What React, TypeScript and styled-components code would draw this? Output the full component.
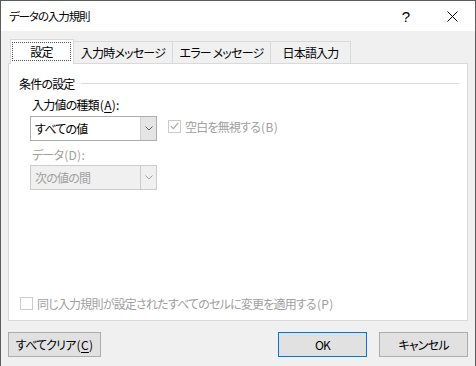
import React from "react";
import styled, { createGlobalStyle } from "styled-components";

const GlobalStyle = createGlobalStyle`
  html, body {
    margin: 0;
    padding: 0;
    background: #ffffff;
  }
  * {
    box-sizing: border-box;
  }
`;

const Window = styled.div`
  width: 476px;
  height: 366px;
  display: flex;
  flex-direction: column;
  border: 1px solid #5c5c5c;
  border-bottom: none;
  font-family: "Noto Sans CJK JP", "Noto Sans", sans-serif;
  font-size: 12px;
  letter-spacing: -0.8px;
  font-feature-settings: "palt";
  color: #000;
  overflow: hidden;
`;

const TitleBar = styled.div`
  height: 30px;
  flex: none;
  display: flex;
  align-items: center;
  background: #ffffff;
  padding-left: 8px;
`;

const Title = styled.div`
  flex: 1;
  font-size: 11.5px;
  letter-spacing: -1.1px;
`;

const TitleButton = styled.div`
  width: 46px;
  height: 30px;
  display: flex;
  align-items: center;
  justify-content: center;
  font-family: "Liberation Sans", sans-serif;
  font-size: 15px;
  letter-spacing: 0;
`;

const Body = styled.div`
  flex: 1;
  display: flex;
  flex-direction: column;
  background: #f0f0f0;
  padding: 8px 7px 0 7px;
`;

const TabRow = styled.div`
  display: flex;
  align-items: flex-end;
  height: 24px;
  padding-left: 2px;
`;

const Tab = styled.div<{ $w: number; $active?: boolean }>`
  width: ${(p) => p.$w}px;
  height: ${(p) => (p.$active ? 25 : 22)}px;
  margin-bottom: ${(p) => (p.$active ? -1 : 0)}px;
  margin-left: -1px;
  position: relative;
  z-index: ${(p) => (p.$active ? 2 : 1)};
  display: flex;
  align-items: stretch;
  justify-content: center;
  background: ${(p) => (p.$active ? "#ffffff" : "#f0f0f0")};
  border: 1px solid #d9d9d9;
  border-bottom: none;
  &:first-child {
    margin-left: 0;
  }
`;

const TabLabel = styled.div<{ $focus?: boolean }>`
  flex: 1;
  display: flex;
  align-items: center;
  justify-content: center;
  padding-bottom: 1px;
  margin: ${(p) => (p.$focus ? "2px 2px 3px 1px" : "0")};
  border: ${(p) => (p.$focus ? "1px dotted #555" : "none")};
`;

const Panel = styled.div`
  height: 258px;
  flex: none;
  display: flex;
  flex-direction: column;
  background: #ffffff;
  border: 1px solid #d9d9d9;
`;

const GroupHeader = styled.div`
  display: flex;
  align-items: center;
  height: 16px;
  margin: 11px 8px 0 10px;
`;

const GroupLine = styled.div`
  flex: 1;
  height: 1px;
  background: #dcdcdc;
  margin-left: 6px;
`;

const FieldLabel = styled.div<{ $disabled?: boolean; $top: number }>`
  height: 16px;
  line-height: 16px;
  margin: ${(p) => p.$top}px 0 0 23px;
  color: ${(p) => (p.$disabled ? "#a0a0a0" : "#000")};
`;

// latin part of a label, e.g. "(A):", keeps normal spacing
const Latin = styled.span`
  letter-spacing: 0.3px;
  margin-left: 1px;
`;

const Key = styled.span`
  text-decoration: underline;
  text-underline-offset: 2px;
`;

const SelectRow = styled.div<{ $top: number }>`
  display: flex;
  align-items: flex-start;
  margin: ${(p) => p.$top}px 0 0 21px;
`;

const Select = styled.div<{ $disabled?: boolean }>`
  width: 127px;
  height: 25px;
  display: flex;
  border: 1px solid ${(p) => (p.$disabled ? "#cccccc" : "#adadad")};
  background: ${(p) => (p.$disabled ? "#f0f0f0" : "#ffffff")};
  color: ${(p) => (p.$disabled ? "#a0a0a0" : "#000")};
`;

const SelectValue = styled.div`
  flex: 1;
  display: flex;
  align-items: center;
  padding-left: 4px;
  padding-bottom: 1px;
`;

const SelectArrow = styled.div<{ $disabled?: boolean }>`
  width: 16px;
  display: flex;
  align-items: center;
  justify-content: center;
  background: ${(p) => (p.$disabled ? "#f0f0f0" : "#e5e5e5")};
  border-left: 1px solid ${(p) => (p.$disabled ? "#cccccc" : "#d0d0d0")};
`;

const CheckRow = styled.div<{ $left: number; $top: number; $bottom?: number }>`
  display: flex;
  align-items: center;
  height: 16px;
  margin: ${(p) => p.$top}px 0 ${(p) => p.$bottom ?? 0}px ${(p) => p.$left}px;
  color: #a0a0a0;
`;

const CheckBox = styled.div`
  width: 13px;
  height: 13px;
  flex: none;
  display: flex;
  align-items: center;
  justify-content: center;
  border: 1px solid #cccccc;
  background: #ffffff;
  margin-right: 4px;
`;

const Spacer = styled.div`
  flex: 1;
`;

const ButtonRow = styled.div`
  display: flex;
  align-items: center;
  margin-top: 11px;
`;

const Button = styled.div<{ $w: number; $default?: boolean; $gap?: number }>`
  width: ${(p) => p.$w}px;
  height: 25px;
  margin-left: ${(p) => p.$gap ?? 0}px;
  display: flex;
  align-items: center;
  justify-content: center;
  padding-bottom: 1px;
  background: #e1e1e1;
  border: 1px solid ${(p) => (p.$default ? "#0078d7" : "#adadad")};
`;

const Chevron = ({ color }: { color: string }) => (
  <svg width="8" height="5" viewBox="0 0 8 5">
    <path d="M0.5 0.5 L4 4 L7.5 0.5" fill="none" stroke={color} strokeWidth="1" />
  </svg>
);

export default function App() {
  return (
    <>
      <GlobalStyle />
      <Window>
        <TitleBar>
          <Title>データの入力規則</Title>
          <TitleButton>?</TitleButton>
          <TitleButton>
            <svg width="11" height="11" viewBox="0 0 11 11">
              <path d="M0.5 0.5 L10.5 10.5 M10.5 0.5 L0.5 10.5" stroke="#000" strokeWidth="1" />
            </svg>
          </TitleButton>
        </TitleBar>
        <Body>
          <TabRow>
            <Tab $w={64} $active>
              <TabLabel $focus>設定</TabLabel>
            </Tab>
            <Tab $w={100}>
              <TabLabel>入力時メッセージ</TabLabel>
            </Tab>
            <Tab $w={99}>
              <TabLabel>エラー メッセージ</TabLabel>
            </Tab>
            <Tab $w={81}>
              <TabLabel>日本語入力</TabLabel>
            </Tab>
          </TabRow>
          <Panel>
            <GroupHeader>
              条件の設定
              <GroupLine />
            </GroupHeader>
            <FieldLabel $top={6}>
              入力値の種類
              <Latin>
                (<Key>A</Key>):
              </Latin>
            </FieldLabel>
            <SelectRow $top={3}>
              <Select>
                <SelectValue>すべての値</SelectValue>
                <SelectArrow>
                  <Chevron color="#606060" />
                </SelectArrow>
              </Select>
              <CheckRow $left={11} $top={2}>
                <CheckBox>
                  <svg width="9" height="8" viewBox="0 0 9 8">
                    <path d="M0.8 4 L3.4 6.6 L8.2 0.8" fill="none" stroke="#a8a8a8" strokeWidth="1.1" />
                  </svg>
                </CheckBox>
                空白を無視する<Latin>(B)</Latin>
              </CheckRow>
            </SelectRow>
            <FieldLabel $disabled $top={6}>
              データ<Latin>(D):</Latin>
            </FieldLabel>
            <SelectRow $top={2}>
              <Select $disabled>
                <SelectValue>次の値の間</SelectValue>
                <SelectArrow $disabled>
                  <Chevron color="#a0a0a0" />
                </SelectArrow>
              </Select>
            </SelectRow>
            <Spacer />
            <CheckRow $left={11} $top={0} $bottom={9}>
              <CheckBox />
              同じ入力規則が設定されたすべてのセルに変更を適用する<Latin>(P)</Latin>
            </CheckRow>
          </Panel>
          <ButtonRow>
            <Button $w={93}>
              すべてクリア
              <Latin>
                (<Key>C</Key>)
              </Latin>
            </Button>
            <Spacer />
            <Button $w={89} $default>
              OK
            </Button>
            <Button $w={89} $gap={12}>
              キャンセル
            </Button>
          </ButtonRow>
        </Body>
      </Window>
    </>
  );
}
